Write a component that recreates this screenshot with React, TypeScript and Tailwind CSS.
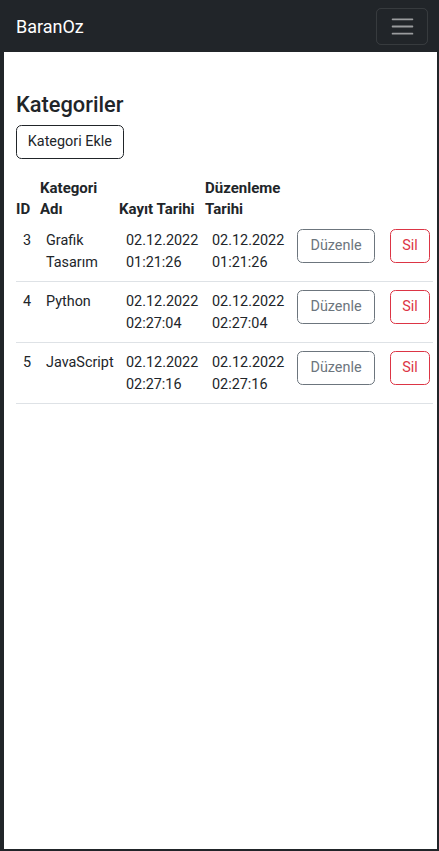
import React from "react";

const rows = [
  { id: 3, name: "Grafik Tasarım", created: ["02.12.2022", "01:21:26"], updated: ["02.12.2022", "01:21:26"] },
  { id: 4, name: "Python", created: ["02.12.2022", "02:27:04"], updated: ["02.12.2022", "02:27:04"] },
  { id: 5, name: "JavaScript", created: ["02.12.2022", "02:27:16"], updated: ["02.12.2022", "02:27:16"] },
];

export default function App() {
  return (
    <div className="h-[851px] overflow-hidden bg-[#212529] flex flex-col font-[Roboto,'Liberation_Sans',sans-serif] text-[#212529]">
      <nav className="h-[52px] shrink-0 flex items-center justify-between pl-4 pr-[11px]">
        <span className="text-white text-[18px] leading-[27px]">BaranOz</span>
        <button className="w-[52px] h-[37px] border border-white/10 rounded-[5px] flex items-center justify-center">
          <svg width="27" height="27" viewBox="0 0 30 30" fill="none">
            <path d="M4 7h22M4 15h22M4 23h22" stroke="rgba(255,255,255,0.55)" strokeWidth="2" strokeLinecap="round" />
          </svg>
        </button>
      </nav>
      <main className="flex-1 bg-white ml-1 mr-[2px] mb-[2px] px-3 pt-[40px]">
        <h3 className="text-[21.8px] leading-[25.6px] font-medium mb-[7.4px]">Kategoriler</h3>
        <button className="px-[10.8px] py-[5.4px] text-[14.4px] leading-[21.6px] border border-[#212529] rounded-[5.4px] text-[#212529]">
          Kategori Ekle
        </button>
        <table className="table-fixed w-[417px] mt-[12.4px] border-collapse text-[14.4px] leading-[21.6px]">
          <colgroup>
            <col className="w-[24px]" />
            <col className="w-[79px]" />
            <col className="w-[86px]" />
            <col className="w-[85px]" />
            <col className="w-[93px]" />
            <col className="w-[50px]" />
          </colgroup>
          <thead>
            <tr className="align-bottom text-[15px]">
              <th className="text-left font-bold pt-[6px] pb-0 px-0">ID</th>
              <th className="text-left font-bold pt-[6px] pb-0 px-0">Kategori Adı</th>
              <th className="text-left font-bold pt-[6px] pb-0 px-0 whitespace-nowrap">Kayıt Tarihi</th>
              <th className="text-left font-bold pt-[6px] pb-0 px-0">Düzenleme Tarihi</th>
              <th className="p-0"></th>
              <th className="p-0"></th>
            </tr>
          </thead>
          <tbody>
            {rows.map((r) => (
              <tr key={r.id} className="align-top border-b border-[#dee2e6]">
                <td className="pl-[7px] pr-0 pt-[9.4px] pb-[7.4px]">{r.id}</td>
                <td className="pl-[6px] pr-0 pt-[9.4px] pb-[7.4px]">{r.name}</td>
                <td className="pl-[7px] pr-0 pt-[9.4px] pb-[7.4px]">
                  {r.created[0]}
                  <br />
                  {r.created[1]}
                </td>
                <td className="pl-[7px] pr-0 pt-[9.4px] pb-[7.4px]">
                  {r.updated[0]}
                  <br />
                  {r.updated[1]}
                </td>
                <td className="pl-[7px] pr-0 pt-[7.8px] pb-0">
                  <button className="w-[78px] px-[10.8px] py-[5.4px] text-[14.4px] leading-[21.6px] border border-[#6c757d] text-[#6c757d] rounded-[5.4px] whitespace-nowrap">
                    Düzenle
                  </button>
                </td>
                <td className="pl-[7px] pr-0 pt-[7.8px] pb-0">
                  <button className="w-[40px] py-[5.4px] text-[14.4px] leading-[21.6px] border border-[#dc3545] text-[#dc3545] rounded-[5.4px] whitespace-nowrap">
                    Sil
                  </button>
                </td>
              </tr>
            ))}
          </tbody>
        </table>
      </main>
    </div>
  );
}
